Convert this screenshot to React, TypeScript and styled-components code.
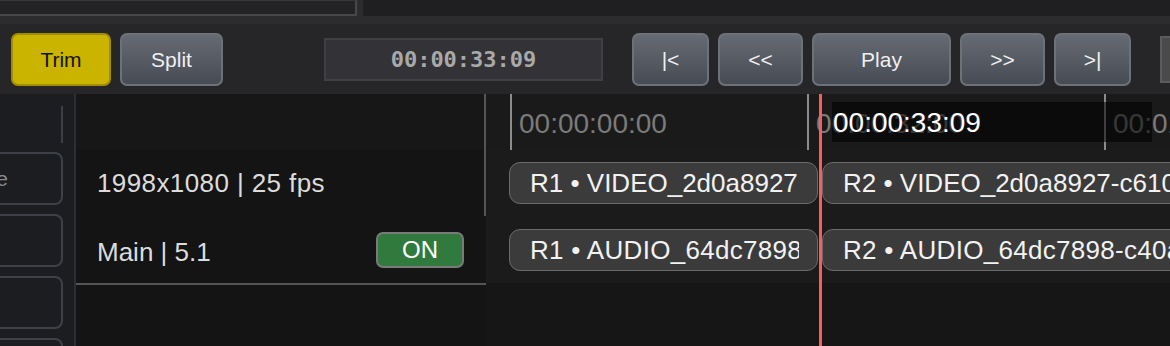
import React from "react";
import styled, { createGlobalStyle } from "styled-components";

const GlobalStyle = createGlobalStyle`
  html, body { margin: 0; padding: 0; background: #141414; }
  body { font-family: "Liberation Sans", Arial, sans-serif; overflow: hidden; }
  * { box-sizing: border-box; }
`;

const Screen = styled.div`
  width: 1170px;
  height: 346px;
  display: flex;
  flex-direction: column;
  overflow: hidden;
`;

const TopStrip = styled.div`
  height: 24px;
  flex-shrink: 0;
  background: #2c2c2e;
  display: flex;
  align-items: flex-start;
`;

const PanelStub = styled.div`
  width: 357px;
  height: 16px;
  flex-shrink: 0;
  background: #232325;
  border-top: 1px solid #37373a;
  border-right: 2px solid #48484c;
  border-bottom: 2px solid #48484c;
`;

const StripFill = styled.div`
  flex: 1;
  height: 16px;
  margin-left: 6px;
  background: #1f1f21;
`;

const Toolbar = styled.div`
  height: 70px;
  flex-shrink: 0;
  background: #262628;
  display: flex;
  align-items: center;
  padding-left: 11px;
  overflow: hidden;
`;

const ButtonGroup = styled.div<{ $offset?: number }>`
  display: flex;
  flex-shrink: 0;
  gap: 9px;
  margin-left: ${(p) => p.$offset ?? 0}px;
`;

const ToolButton = styled.button<{ $width: number; $variant?: "trim" | "normal" }>`
  width: ${(p) => p.$width}px;
  flex-shrink: 0;
  height: 53px;
  border-radius: 7px;
  font-family: "Liberation Sans", Arial, sans-serif;
  font-size: 21px;
  display: flex;
  align-items: center;
  justify-content: center;
  padding: 2px 0 0 0;
  ${(p) =>
    p.$variant === "trim"
      ? `
    background: #cbb400;
    border: 2px solid #a08e00;
    color: #111;
  `
      : `
    background: linear-gradient(#656a73, #464b54);
    border: 2px solid #6d727a;
    color: #f0f0f0;
  `}
`;

const Timecode = styled.div`
  width: 279px;
  flex-shrink: 0;
  height: 43px;
  margin-left: 101px;
  background: #333236;
  border: 2px solid #404044;
  display: flex;
  align-items: center;
  justify-content: center;
  font-family: "DejaVu Sans Mono", "Liberation Mono", monospace;
  font-weight: bold;
  font-size: 22px;
  color: #a9a9a9;
`;

const ToolbarStub = styled.div`
  width: 60px;
  height: 47px;
  margin-left: 29px;
  flex-shrink: 0;
  background: #4a4a4b;
  border: 2px solid #5c5c5e;
`;

const Main = styled.div`
  flex: 1;
  display: flex;
  min-height: 0;
`;

const Sidebar = styled.div`
  width: 76px;
  flex-shrink: 0;
  background: #1b1d21;
  border-right: 2px solid #2b2e34;
  overflow: hidden;
  display: flex;
  flex-direction: column;
  align-items: flex-end;
  padding-right: 11px;
  gap: 9px;
`;

const SideDivider = styled.div`
  width: 10px;
  height: 37px;
  margin-top: 12px;
  border-right: 2px solid #3c3f46;
  flex-shrink: 0;
`;

const SideButton = styled.div`
  width: 180px;
  height: 53px;
  flex-shrink: 0;
  border: 2px solid #3d4047;
  border-radius: 8px;
  display: flex;
  align-items: center;
  justify-content: center;
  font-size: 21px;
  color: #8a8a8a;
  white-space: nowrap;
`;

const HeaderPanel = styled.div`
  width: 410px;
  flex-shrink: 0;
  display: flex;
  flex-direction: column;
  background: #141414;
`;

const HeaderTop = styled.div`
  height: 56px;
  flex-shrink: 0;
  background: #171717;
  border-right: 2px solid #555;
`;

const InfoRow = styled.div<{ $last?: boolean }>`
  height: ${(p) => (p.$last ? 69 : 66)}px;
  flex-shrink: 0;
  display: flex;
  align-items: center;
  justify-content: space-between;
  padding-left: 21px;
  padding-right: 22px;
  font-size: 26px;
  color: #dcdcdc;
  background: #141414;
  ${(p) =>
    p.$last
      ? `border-bottom: 2px solid #555; padding-top: 1px;`
      : `border-right: 2px solid #555; letter-spacing: 0.4px; padding-top: 1px;`}
`;

const InfoText = styled.span`
  padding-top: 4px;
`;

const Toggle = styled.div`
  width: 88px;
  height: 36px;
  background: #2f7a3c;
  border: 2px solid #7a7a7a;
  border-radius: 7px;
  display: flex;
  align-items: center;
  justify-content: center;
  color: #fff;
  font-size: 24px;
`;

const HeaderRest = styled.div`
  flex: 1;
  background: #141414;
`;

const TrackArea = styled.div`
  flex: 1;
  position: relative;
  display: flex;
  flex-direction: column;
  background: #161616;
  overflow: hidden;
`;

const Ruler = styled.div`
  height: 56px;
  flex-shrink: 0;
  background: #1a1a1a;
  display: flex;
  padding-left: 24px;
`;

const Tick = styled.div`
  flex: 0 0 297px;
  height: 100%;
  border-left: 2px solid #8c8c8c;
  padding-left: 7px;
  padding-top: 4px;
  display: flex;
  align-items: center;
  font-size: 28px;
  color: #7b7b7b;
  white-space: nowrap;
`;

const TrackRow = styled.div<{ $height: number }>`
  height: ${(p) => p.$height}px;
  flex-shrink: 0;
  background: #1b1b1b;
  display: flex;
  align-items: center;
  padding-left: 23px;
  gap: 4px;
`;

const Clip = styled.div<{ $width: number }>`
  flex: 0 0 ${(p) => p.$width}px;
  height: 42px;
  background: #3b3b3b;
  border: 1.5px solid #6b6b6b;
  border-radius: 11px;
  padding: 1px 18px 0 20px;
  display: flex;
  align-items: center;
  font-size: 26px;
  color: #f2f2f2;
  overflow: hidden;
`;

const ClipText = styled.span<{ $wide?: boolean }>`
  overflow: hidden;
  white-space: nowrap;
  letter-spacing: ${(p) => (p.$wide ? 0.3 : 0)}px;
`;

const TrackRest = styled.div`
  flex: 1;
  background: #161616;
`;

const Playhead = styled.div`
  position: absolute;
  left: 333px;
  top: 0;
  bottom: 0;
  width: 3px;
  background: #ff5b5b;
  z-index: 2;
`;

const PlayheadLabel = styled.div`
  position: absolute;
  left: 13px;
  top: 8px;
  width: 320px;
  height: 40px;
  background: rgba(0, 0, 0, 0.55);
  color: #ffffff;
  font-size: 28px;
  padding-left: 1px;
  padding-top: 2px;
  display: flex;
  align-items: center;
  white-space: nowrap;
`;

export default function App() {
  return (
    <>
      <GlobalStyle />
      <Screen>
        <TopStrip>
          <PanelStub />
          <StripFill />
        </TopStrip>
        <Toolbar>
          <ButtonGroup>
            <ToolButton $width={100} $variant="trim">Trim</ToolButton>
            <ToolButton $width={103}>Split</ToolButton>
          </ButtonGroup>
          <Timecode>00:00:33:09</Timecode>
          <ButtonGroup $offset={29}>
            <ToolButton $width={77}>|&lt;</ToolButton>
            <ToolButton $width={85}>&lt;&lt;</ToolButton>
            <ToolButton $width={139}>Play</ToolButton>
            <ToolButton $width={85}>&gt;&gt;</ToolButton>
            <ToolButton $width={77}>&gt;|</ToolButton>
          </ButtonGroup>
          <ToolbarStub />
        </Toolbar>
        <Main>
          <Sidebar>
            <SideDivider />
            <SideButton>Archive</SideButton>
            <SideButton>Lock</SideButton>
            <SideButton>Hide</SideButton>
            <SideButton>Solo</SideButton>
          </Sidebar>
          <HeaderPanel>
            <HeaderTop />
            <InfoRow>1998x1080 | 25 fps</InfoRow>
            <InfoRow $last>
              <InfoText>Main | 5.1</InfoText>
              <Toggle>ON</Toggle>
            </InfoRow>
            <HeaderRest />
          </HeaderPanel>
          <TrackArea>
            <Ruler>
              <Tick>00:00:00:00</Tick>
              <Tick>00:00:32:00</Tick>
              <Tick>00:01:04:00</Tick>
            </Ruler>
            <TrackRow $height={66}>
              <Clip $width={309}>
                <ClipText>R1 • VIDEO_2d0a8927</ClipText>
              </Clip>
              <Clip $width={420}>
                <ClipText>R2 • VIDEO_2d0a8927-c610</ClipText>
              </Clip>
            </TrackRow>
            <TrackRow $height={67}>
              <Clip $width={309}>
                <ClipText $wide>R1 • AUDIO_64dc7898</ClipText>
              </Clip>
              <Clip $width={420}>
                <ClipText $wide>R2 • AUDIO_64dc7898-c40a</ClipText>
              </Clip>
            </TrackRow>
            <TrackRest />
            <Playhead>
              <PlayheadLabel>00:00:33:09</PlayheadLabel>
            </Playhead>
          </TrackArea>
        </Main>
      </Screen>
    </>
  );
}
